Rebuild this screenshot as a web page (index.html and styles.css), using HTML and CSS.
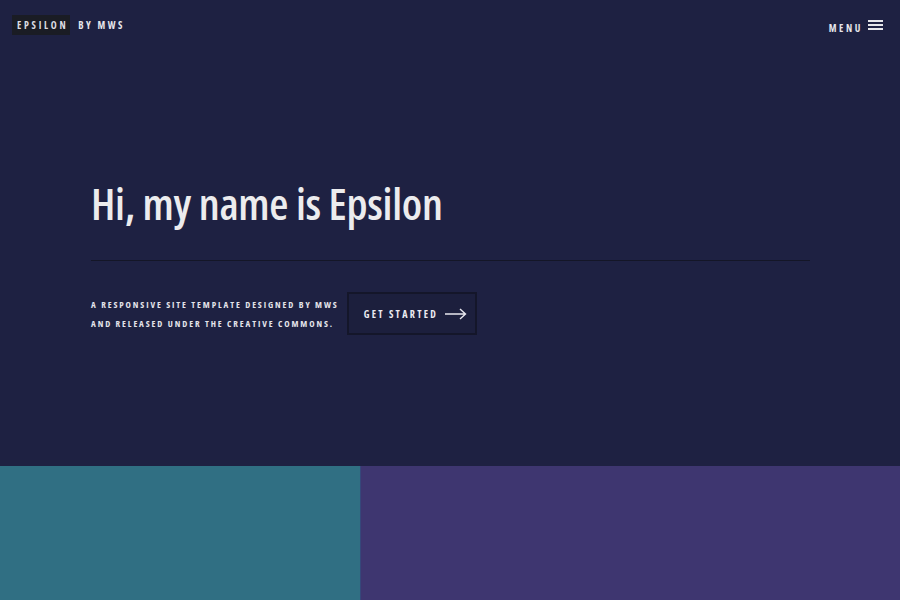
FILE: index.html
```html
<!DOCTYPE html>
<html>
<head>
<meta charset="utf-8">
<link rel="stylesheet" href="styles.css">
</head>
<body>
<section class="hero">
  <header class="topbar">
    <div class="logo"><span class="logo-box">EPSILON</span><span class="logo-by">BY MWS</span></div>
    <div class="menu"><span>MENU</span>
      <svg class="burger" width="15" height="12" viewBox="0 0 15 12"><rect x="0" y="1" width="15" height="2" fill="#e6e6ea"/><rect x="0" y="5" width="15" height="2" fill="#e6e6ea"/><rect x="0" y="9" width="15" height="2" fill="#e6e6ea"/></svg>
    </div>
  </header>
  <div class="intro">
    <h1 class="title">Hi, my name is Epsilon</h1>
    <div class="rule"></div>
    <div class="intro-row">
      <p class="lead">A responsive site template designed by MWS<br>and released under the Creative Commons.</p>
      <a class="btn"><span>GET STARTED</span>
        <svg width="22" height="12" viewBox="0 0 22 12"><path d="M0 6H20M15 1L20.5 6L15 11" stroke="#e8e8ee" stroke-width="1.4" fill="none"/></svg>
      </a>
    </div>
  </div>
</section>
<section class="tiles">
  <div class="tile tile-teal"></div>
  <div class="tile tile-purple"></div>
</section>
</body>
</html>
```
FILE: styles.css
```css
html, body { margin: 0; padding: 0; }
body {
  width: 900px;
  height: 600px;
  overflow: hidden;
  background: #1e2142;
  font-family: "Open Sans", sans-serif;
  font-stretch: 75%;
  color: #ececf0;
}
.hero {
  height: 466px;
  background: #1e2142;
  display: flex;
  flex-direction: column;
}
.topbar {
  display: flex;
  justify-content: space-between;
  align-items: center;
  padding: 15px 17px 0 12px;
  height: 20px;
}
.logo { display: flex; align-items: center; font-weight: 700; font-size: 10px; letter-spacing: 2.7px; white-space: nowrap; }
.logo-box {
  background: #1a1c24;
  padding: 5px 2px 5px 5px;
  line-height: 10px;
  color: #dcdce2;
}
.logo-by { margin-left: 8px; color: #e6e6ec; letter-spacing: 2.5px; }
.menu {
  display: flex;
  align-items: center;
  gap: 5px;
  font-weight: 700;
  font-size: 10px;
  letter-spacing: 2.6px;
  margin-top: 6px;
  color: #e6e6ec;
}
.burger { margin-top: -6px; }
.intro {
  padding: 0 90px 0 91px;
  margin-top: 140px;
}
.title {
  margin: 0;
  font-weight: 600;
  font-size: 44px;
  line-height: 56px;
  color: #ececee;
  letter-spacing: -0.3px;
  white-space: nowrap;
}
.rule {
  height: 1px;
  background: #141627;
  margin-top: 29px;
}
.intro-row {
  display: flex;
  align-items: center;
  margin-top: 31px;
}
.lead {
  margin: 0;
  font-weight: 700;
  font-size: 9px;
  line-height: 19px;
  letter-spacing: 1.9px;
  text-transform: uppercase;
  color: #e4e4ea;
  white-space: nowrap;
}
.btn {
  display: flex;
  align-items: center;
  gap: 7px;
  box-sizing: border-box;
  height: 43px;
  width: 130px;
  padding-left: 15px;
  border: 2px solid #14162a;
  background: #1c1f3d;
  font-weight: 700;
  font-size: 10px;
  letter-spacing: 2.3px;
  color: #ececf2;
  margin-left: 8px;
  white-space: nowrap;
}
.tiles {
  display: flex;
  height: 134px;
}
.tile-teal { width: 360px; background: #306f83; }
.tile-purple { flex: 1; background: #3e3670; border-left: 1px solid #36477a; }
```
